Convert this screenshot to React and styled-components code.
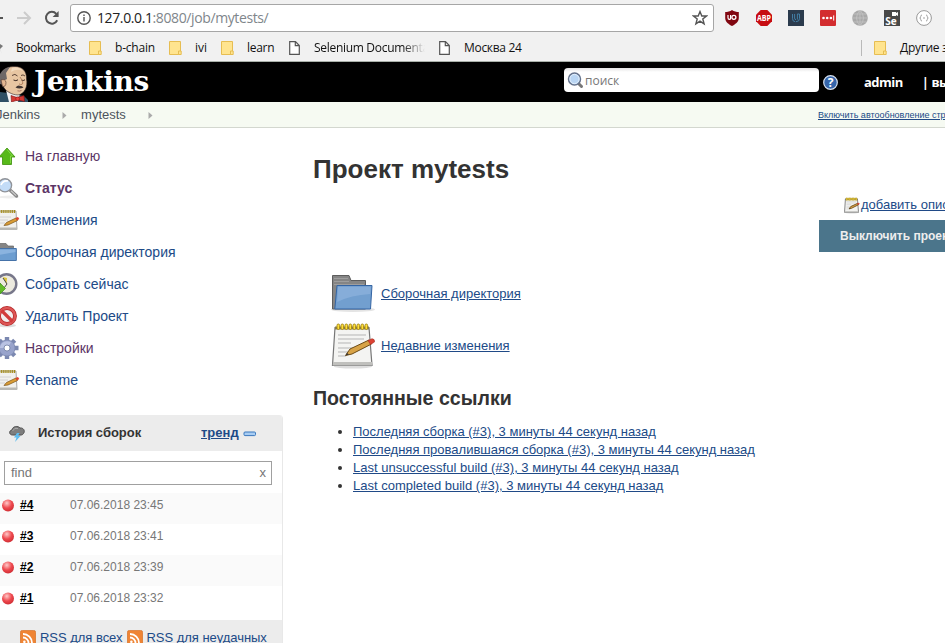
import React from "react";
import styled, { createGlobalStyle } from "styled-components";

const Global = createGlobalStyle`
  * { box-sizing: border-box; }
  body { margin: 0; background: #fff; overflow: hidden; font-family: "Liberation Sans", Arial, sans-serif; }
  svg { display: block; flex: none; }
`;

const Page = styled.div`
  width: 945px;
  height: 643px;
  overflow: hidden;
  background: #fff;
  color: #333;
  font-size: 13px;
  white-space: nowrap;
`;

/* ---------- browser frame ---------- */
const Browser = styled.div`
  height: 62px;
  background: #f1f1f1;
  border-bottom: 1px solid #a9b0a9;
  font-family: "Open Sans", "Noto Sans", sans-serif;
`;
const Toolbar = styled.div`
  height: 36px;
  display: flex;
  align-items: center;
`;
const NavButtons = styled.div`
  width: 70px;
  display: flex;
  align-items: center;
`;
const NavGroup = styled.div`
  display: flex;
  gap: 12px;
`;
const UrlBox = styled.div`
  width: 644px;
  height: 28px;
  border: 1px solid #a6a6a6;
  border-radius: 3px;
  background: #fff;
  display: flex;
  align-items: center;
  padding: 0 5px 0 6px;
`;
const Url = styled.span`
  flex: 1;
  margin-left: 6px;
  padding-bottom: 1px;
  font-size: 14px;
  letter-spacing: -0.39px;
  color: #80868b;
  b { font-weight: 400; color: #222; }
`;
const Extensions = styled.div`
  display: flex;
  gap: 16px;
  margin-left: 10px;
`;
const Bookmarks = styled.div`
  height: 23px;
  display: flex;
  align-items: center;
  font-size: 12px;
  color: #111;
`;
const Bookmark = styled.span`
  width: ${(p) => p.$w}px;
  flex: none;
  display: flex;
  align-items: center;
  overflow: hidden;
  letter-spacing: ${(p) => p.$ls || 0}px;
`;
const BookmarkLabel = styled.span`
  margin-left: ${(p) => p.$gap}px;
  ${(p) => p.$fade && `
    width: 111px;
    overflow: hidden;
    mask-image: linear-gradient(90deg, #000 80%, transparent);
  `}
`;
const Separator = styled.span`
  width: 1px;
  height: 16px;
  margin-left: auto;
  margin-right: 12px;
  background: #b9b9b9;
`;

/* ---------- Jenkins header ---------- */
const Header = styled.header`
  height: 40px;
  background: #000;
  display: flex;
  align-items: flex-start;
  overflow: hidden;
  color: #fff;
`;
const Brand = styled.div`
  width: 564px;
  height: 40px;
  flex: none;
  display: flex;
  align-items: flex-start;
`;
const BrandName = styled.span`
  margin: 3px 0 0 6px;
  font: bold 28px/34px "DejaVu Serif", serif;
  letter-spacing: -0.4px;
`;
const Search = styled.div`
  width: 255px;
  height: 24px;
  flex: none;
  margin-top: 6px;
  padding-left: 3px;
  border-radius: 4px;
  background: linear-gradient(#e4e4e4, #fff 4px);
  display: flex;
  align-items: center;
  color: #777;
  font: 12px "Open Sans", sans-serif;
  svg { margin-right: 1px; }
`;
const Help = styled.div`
  flex: none;
  margin: 13px 0 0 4px;
`;
const HeaderLink = styled.span`
  flex: none;
  margin: 10px 0 0 ${(p) => p.$gap}px;
  font: bold 13px/20px "Open Sans", sans-serif;
  letter-spacing: -0.5px;
`;

const Crumbs = styled.nav`
  height: 26px;
  background: #f6faf2;
  border-bottom: 1px solid #d3d7cf;
  display: flex;
  align-items: center;
  color: #4d545d;
`;
const Crumb = styled.span`
  margin-left: ${(p) => p.$gap}px;
  margin-right: ${(p) => p.$after}px;
`;
const RefreshLink = styled.a`
  width: 127px;
  margin-left: auto;
  overflow: hidden;
  font-size: 9px;
  text-decoration: underline;
  color: #204a87;
`;

/* ---------- body ---------- */
const Body = styled.div`
  display: flex;
`;
const Side = styled.aside`
  width: 283px;
  padding-top: 12px;
`;
const Task = styled.div`
  height: 32px;
  display: flex;
  align-items: center;
  font-size: 14px;
  font-weight: ${(p) => (p.$active ? 700 : 400)};
  color: ${(p) => (p.$visited ? "#5c3566" : "#204a87")};
  span { margin-left: 5px; color: inherit; }
  svg { width: 20px; height: 24px; }
`;

const History = styled.section`
  margin-top: 19px;
  border-right: 1px solid #e8e8e8;
  border-radius: 0 4px 0 0;
  overflow: hidden;
`;
const HistoryHead = styled.div`
  height: 36px;
  padding: 0 0 1px 8px;
  background: #ececec;
  display: flex;
  align-items: center;
  font-weight: 700;
`;
const HistoryTitle = styled.span`
  width: 163px;
  margin-left: 12px;
`;
const Trend = styled.a`
  margin-right: 4px;
  text-decoration: underline;
  color: #204a87;
`;
const TrendToggle = styled.span`
  margin-top: 3px;
`;
const Filter = styled.div`
  width: 268px;
  height: 24px;
  margin: 10px 0 8px 4px;
  padding: 0 5px 2px 6px;
  border: 1px solid #a0a0a0;
  display: flex;
  justify-content: space-between;
  align-items: center;
  color: #757575;
`;
const Build = styled.div`
  height: 31px;
  padding: 0 0 7px 2px;
  display: flex;
  align-items: center;
  background: ${(p) => (p.$odd ? "#fafafa" : "#fff")};
`;
const BuildNo = styled.a`
  width: 50px;
  margin-left: 6px;
  font-size: 12px;
  font-weight: 700;
  text-decoration: underline;
  color: #000;
`;
const BuildTime = styled.span`
  font-size: 12px;
  color: #777;
`;
const Feeds = styled.div`
  height: 30px;
  margin-top: 3px;
  padding: 9px 0 0 20px;
  background: #ececec;
  display: flex;
  gap: 4px;
  color: #204a87;
  line-height: 18px;
  letter-spacing: -0.03px;
  svg { margin-top: 1px; }
`;

const Main = styled.main`
  flex: 1;
  min-width: 0;
  padding: 24px 0 0 30px;
`;
const Title = styled.h1`
  height: 34px;
  margin: 0;
  font-size: 26px;
  line-height: 34px;
  color: #333;
`;
const Aside = styled.div`
  width: 126px;
  margin: 6px 0 0 auto;
  overflow: hidden;
`;
const AddDescription = styled.div`
  height: 28px;
  padding: 0 0 4px 25px;
  display: flex;
  align-items: center;
  svg { margin-top: 2px; }
`;
const DisableButton = styled.button`
  width: 150px;
  height: 32px;
  padding: 0 0 0 21px;
  border: 0;
  background: #4b758b;
  color: #eee;
  font: bold 12px "Liberation Sans", sans-serif;
  text-align: left;
  display: block;
`;
const Link = styled.a`
  color: #204a87;
  text-decoration: underline;
`;
const Summary = styled.div`
  padding: 16px 0 0 18px;
`;
const SummaryRow = styled.div`
  height: 52px;
  display: flex;
  align-items: center;
  svg { margin-right: 2px; }
  a { margin-bottom: 2px; }
`;
const Subtitle = styled.h2`
  height: 26px;
  margin: 13px 0 12px;
  font-size: 19.6px;
  line-height: 26px;
`;
const Permalinks = styled.ul`
  margin: 0;
  padding-left: 40px;
  line-height: 18px;
`;

/* ---------- icons ---------- */
const Arrow = ({ back }) => (
  <svg width={back ? 4 : 16} height="16" viewBox={back ? "12 0 4 16" : "0 0 16 16"} fill="none" stroke={back ? "#555" : "#ccc"} strokeWidth="2">
    <path d={back ? "M2 8H15" : "M1 8H14M8 2L14 8L8 14"} />
  </svg>
);
const Reload = () => (
  <svg width="16" height="16" viewBox="0 0 16 16">
    <path d="M13.2 10.3A5.9 5.9 0 1 1 12.3 3.8" fill="none" stroke="#555" strokeWidth="2" />
    <path d="M14.6 1V7H8.6Z" fill="#555" />
  </svg>
);
const Info = () => (
  <svg width="14" height="14" viewBox="0 0 14 14" fill="none" stroke="#555" strokeWidth="1.4">
    <circle cx="7" cy="7" r="6.2" />
    <path d="M7 6V10.5M7 3.4V5" />
  </svg>
);
const Star = () => (
  <svg width="16" height="16" viewBox="0 0 16 16" fill="none" stroke="#555" strokeWidth="1.4">
    <path d="M8 1.6L9.8 6H14.5L10.8 9L12.1 13.8L8 11.1L3.9 13.8L5.2 9L1.5 6H6.2Z" />
  </svg>
);
const FolderMark = () => (
  <svg width="13" height="14" viewBox="0 0 13 14">
    <path d="M.5.5H11.5V13.5H.5Z" fill="#ffe48f" stroke="#e6bd52" />
    <path d="M9.5 13.5V10H12.2V13.5Z" fill="#ffe48f" stroke="#e6bd52" />
  </svg>
);
const PageMark = () => (
  <svg width="11" height="14" viewBox="0 0 11 14" fill="#fff" stroke="#555" strokeWidth="1.2">
    <path d="M.7.7H6.5L10.3 4.5V13.3H.7ZM6.3.7V4.7H10.3" />
  </svg>
);
const label = { fontFamily: "Open Sans, sans-serif", fontWeight: 700, textAnchor: "middle", fill: "#fff" };

const ExtensionIcons = () => (
  <Extensions>
    <svg width="16" height="16" viewBox="0 0 16 16">
      <path d="M8 0C10 1.5 12.5 2 14.8 2V8C14.8 12 11 14.5 8 16C5 14.5 1.2 12 1.2 8V2C3.5 2 6 1.5 8 0Z" fill="#800610" />
      <path d="M4 5V7.8Q4 9.4 5.3 9.4T6.6 7.8V5" fill="none" stroke="#fff" strokeWidth="1.2" />
      <circle cx="9.9" cy="7.3" r="2" fill="none" stroke="#fff" strokeWidth="1.3" />
    </svg>
    <svg width="16" height="16" viewBox="0 0 16 16">
      <path d="M4.7 0H11.3L16 4.7V11.3L11.3 16H4.7L0 11.3V4.7Z" fill="#c70d12" />
      <text x="8" y="11" fontSize="8" textLength="14" lengthAdjust="spacingAndGlyphs" {...label}>ABP</text>
    </svg>
    <svg width="16" height="16" viewBox="0 0 16 16">
      <path d="M0 0H16V16H0Z" fill="#2b3b4d" />
      <path d="M4.5 4V8.5Q4.5 11.7 7.2 11.7M6.6 4V8Q6.6 9.7 8 9.7M9.4 9.5V4H11.5V8.5Q11.5 11.7 8 11.7" fill="none" stroke="#4584ad" strokeWidth=".9" />
    </svg>
    <svg width="16" height="16" viewBox="0 0 16 16">
      <rect width="16" height="16" rx="1" fill="#d32d2f" />
      <circle cx="3.5" cy="8" r="1.3" fill="#fff" /><circle cx="7.2" cy="8" r="1.3" fill="#fff" /><circle cx="10.9" cy="8" r="1.3" fill="#fff" />
      <path d="M13.7 5.4V10.6" stroke="#fff" />
    </svg>
    <svg width="16" height="16" viewBox="0 0 16 16">
      <circle cx="8" cy="8" r="7.8" fill="#a9a9a9" />
      <path d="M8 0V16M0 8H16M1.5 4H14.5M1.5 12H14.5M8 0Q1 8 8 16M8 0Q15 8 8 16" fill="none" stroke="#c4c4c4" strokeWidth=".8" />
    </svg>
    <svg width="16" height="16" viewBox="0 0 16 16">
      <path d="M0 0H16V16H0Z" fill="#484848" />
      <path d="M8 2H12V3L14 2V6L12 5V6H8Z" fill="#fff" />
      <text x="7" y="14.5" fontSize="10" {...label}>Se</text>
    </svg>
    <svg width="16" height="16" viewBox="0 0 16 16" fill="none" stroke="#999">
      <circle cx="8" cy="8" r="7.4" fill="#fff" />
      <path d="M6 5Q4.7 5 4.7 6.5T3.7 8Q4.7 8 4.7 9.5T6 11M10 5Q11.3 5 11.3 6.5T12.3 8Q11.3 8 11.3 9.5T10 11M7 8H9" strokeWidth=".9" />
    </svg>
  </Extensions>
);

const Butler = () => (
  <svg width="28" height="40" viewBox="0 0 28 40">
    <path d="M0 30L8 31L24 34L28 38V40H0Z" fill="#2f5064" />
    <path d="M6 28L20 31L18 40H9Z" fill="#f4f4f4" />
    <path d="M2 11C4 6 9 4.5 15 4.5C22 4.5 27 9 26.5 17C28 24 25 32 18 33C12 33 5 29 3 24Z" fill="#e8c6a2" stroke="#2a2020" strokeWidth=".6" />
    <path d="M12 6Q19 4 23 9Q17 6 11 10Z" fill="#f3dcc0" />
    <path d="M0 12Q3 6 10 5L6 11L7 17L5 18L3 23L0 22Z" fill="#6e6867" />
    <path d="M1 18Q5.5 16.500 6 20.500Q6 25 2.500 24.500Z" fill="#e2b690" stroke="#4b332a" strokeWidth=".6" />
    <path d="M12 13.500Q15 11 17.500 14M21 13.500Q23 12 25 14" fill="none" stroke="#4c342a" strokeWidth=".9" />
    <path d="M13.500 18Q16 19.500 18 17.800M21.500 18Q23 19.200 25 17.800" fill="none" stroke="#3a2923" strokeWidth="1" />
    <path d="M20 15Q23.500 20 22.500 22Q20.500 23.500 19 21.800" fill="none" stroke="#a4714f" strokeWidth=".8" />
    <path d="M15.500 25.500Q18 22.500 20.500 24Q22 23.500 23.500 25.500Q19.500 27.500 15.500 25.500" fill="#413532" />
    <path d="M17.500 28.800Q19.500 29.500 21.500 28.500" fill="none" stroke="#9b5b4d" strokeWidth=".8" />
    <path d="M11 33.500L17 35.500L24 33.500L24.500 39.500L18 38L11.500 40Z" fill="#d33833" stroke="#711" strokeWidth=".6" />
    <circle cx="17.600" cy="36.800" r="1.900" fill="#ef3d3a" stroke="#711" strokeWidth=".5" />
  </svg>
);
const SearchIcon = () => (
  <svg width="17" height="17" viewBox="0 0 17 17">
    <path d="M12 12L14.5 14.500" stroke="#777" strokeWidth="3" strokeLinecap="round" />
    <circle cx="7.500" cy="7" r="6" fill="#b9d5f3" stroke="#66738c" strokeWidth="1.500" />
    <circle cx="7.500" cy="7" r="4.600" fill="none" stroke="#e3effb" />
  </svg>
);
const HelpIcon = () => (
  <svg width="15" height="15" viewBox="0 0 15 15">
    <circle cx="7.500" cy="7.500" r="6.800" fill="#3565aa" stroke="#d9e3f2" strokeWidth="1.200" />
    <text x="7.500" y="11.800" fontSize="12" {...label}>?</text>
  </svg>
);
const Caret = () => (
  <svg width="5" height="8" viewBox="0 0 5 8"><path d="M.5 1L4.500 4.500L.5 8Z" fill="#aaa" /></svg>
);

const UpIcon = () => (
  <svg viewBox="4 0 20 24">
    <path d="M11 4L19 13H15.500V20.500H6.500V13H3Z" fill="#57b91a" stroke="#3c8f0a" strokeWidth=".8" />
    <path d="M11 5.500L16.500 12H14.500V19" fill="none" stroke="#8be04e" strokeWidth=".8" />
  </svg>
);
const LensIcon = () => (
  <svg viewBox="4 0 20 24">
    <ellipse cx="13" cy="21" rx="10" ry="1.500" fill="#eee" />
    <path d="M14.500 14.500L20.500 20" stroke="#888" strokeWidth="3.400" strokeLinecap="round" />
    <path d="M15 14.800L20.200 19.600" stroke="#ccc" strokeWidth="1.200" />
    <circle cx="9" cy="9.300" r="6.600" fill="#c3dcf7" stroke="#909399" strokeWidth="1.400" />
    <path d="M5 9Q7 4 12 5" fill="none" stroke="#fff" strokeWidth="1.600" />
  </svg>
);
const PadIcon = () => (
  <svg viewBox="4 0 20 24">
    <path d="M2 3H20L21 21.500H2Z" fill="#f1f1ee" stroke="#aaa" />
    <path d="M2 19.500H21V22H2Z" fill="#b9b9b5" />
    <path d="M3 3.500H20" stroke="#a28a18" strokeWidth="3" strokeDasharray="1.3 .8" />
    <path d="M4 9H15M4 12H12M4 15H9" stroke="#ccc" strokeWidth=".8" />
    <path d="M8 17.500L10.500 14.500L20 10L21.500 12.500L12 17Z" fill="#d99c35" stroke="#7a531a" strokeWidth=".7" />
    <path d="M19.500 10L22 9L23.300 11L21 12.500Z" fill="#df4030" />
  </svg>
);
const FolderIcon = () => (
  <svg viewBox="4 0 20 24">
    <path d="M2 3.500H10L12 6H17.500V12H2Z" fill="#858585" stroke="#666" strokeWidth=".7" />
    <path d="M2 8.500H20.300V20.500H2Z" fill="#6c9dd0" stroke="#4572a8" />
    <path d="M3 9.500H19.500V12L3 15Z" fill="#8ab3df" />
  </svg>
);
const ClockIcon = () => (
  <svg viewBox="4 0 20 24">
    <circle cx="10.500" cy="12" r="9.800" fill="#eceadf" stroke="#77778a" strokeWidth="2.400" />
    <path d="M7 5L11 6L10.500 12Z" fill="#ddc438" />
    <path d="M7 6L11 12L8 16" fill="none" stroke="#444" />
    <path d="M2 13H4V11L9.500 16.500L4 22V19H2Z" fill="#62bc29" stroke="#43921a" strokeWidth=".7" />
  </svg>
);
const StopIcon = () => (
  <svg viewBox="4 0 20 24">
    <ellipse cx="11" cy="21.500" rx="9" ry="1.800" fill="#ddd" />
    <circle cx="11" cy="12" r="8" fill="#f2efef" stroke="#b32626" strokeWidth="3.800" />
    <circle cx="11" cy="12" r="8" fill="none" stroke="#dd5656" strokeWidth="2.400" />
    <path d="M5.500 6.500L16.500 17.500" stroke="#d23c3c" strokeWidth="3.200" />
  </svg>
);
const GearIcon = () => (
  <svg viewBox="4 0 20 24">
    <g stroke="#7b88b0" strokeWidth="4.400">
      <path d="M11 1V23M0 12H22.500M3.300 4.300L18.700 19.700M18.700 4.300L3.300 19.700" />
    </g>
    <circle cx="11" cy="12" r="8" fill="#98a3cb" stroke="#7f8cb4" strokeWidth=".8" />
    <path d="M4 12A7 7 0 0 1 15 6.500L11 12Z" fill="#b9c2e2" />
    <circle cx="11" cy="12" r="3" fill="#fff" stroke="#6d7b9f" strokeWidth=".8" />
  </svg>
);
const StormIcon = () => (
  <svg width="18" height="18" viewBox="0 0 18 18">
    <path d="M4.500 11C1 11 .6 6.500 4 6C4.500 2 10 1.500 12 4C15.500 3.500 17.500 7 15.500 9.500C14.500 11.500 12 11 11 11Z" fill="#7d7d7d" stroke="#505050" />
    <path d="M4.500 7Q6.500 3 10 4.500" fill="none" stroke="#aaa" />
    <path d="M9 9L6 13.500H8.500L7 18L12.500 12H10L11.500 9Z" fill="#5ebdf0" />
  </svg>
);
const RedBall = () => (
  <svg width="12" height="14" viewBox="0 0 12 14">
    <defs><radialGradient id="ball" cx=".4" cy=".3" r=".75"><stop stopColor="#ffc9c9" /><stop offset=".55" stopColor="#ee484e" /><stop offset="1" stopColor="#cc2b31" /></radialGradient></defs>
    <circle cx="6" cy="7.500" r="6" fill="url(#ball)" />
  </svg>
);
const FeedIcon = () => (
  <svg width="16" height="16" viewBox="0 0 16 16" fill="none" stroke="#fff" strokeWidth="1.800">
    <rect x=".4" y=".4" width="15.200" height="15.200" rx="2" fill="#ef8434" stroke="#d6752d" strokeWidth=".8" />
    <path d="M3 7.500A5.600 5.600 0 0 1 8.500 13M3 4A9 9 0 0 1 12 13" />
    <circle cx="4.400" cy="11.800" r="1.300" fill="#fff" stroke="none" />
  </svg>
);
const BigFolder = () => (
  <svg width="48" height="48" viewBox="0 0 48 48">
    <ellipse cx="22" cy="39.500" rx="22" ry="2.500" fill="#e4e4e4" />
    <path d="M1.500 39V5.500H18L20 10.500H34.500V39Z" fill="#858585" stroke="#5d5d5d" />
    <path d="M3 8.500H17M3 11.500H18M3 14.500H33" stroke="#a5a5a5" strokeWidth=".8" />
    <path d="M6 15.500H41L39.500 39H3.800Z" fill="#729fcf" stroke="#3465a4" />
    <path d="M7 16.700H39.700L39.200 24Q20 25 6.200 32Z" fill="#91b6df" opacity=".65" />
  </svg>
);
const BigPad = ({ size = 48 }) => (
  <svg width={size} height={size} viewBox="0 0 48 48">
    <ellipse cx="22" cy="44.500" rx="19" ry="2" fill="#ddd" />
    <path d="M4 5.500H38L41 43.500H1.500Z" fill="#f4f4f2" stroke="#777" strokeWidth={size < 20 ? 2.5 : 1.2} />
    <path d="M2 40H41V43.500H1.600Z" fill="#c0c0bd" />
    <path d="M4 6H38" stroke="#847b50" strokeWidth="3" />
    <path d="M7 13H35M7 17H33M7 21H20M7 26H31M7 30H22M7 34H15" stroke="#b5b5b5" />
    {[6, 10, 14, 18, 22, 26, 30, 34].map((x) => (
      <rect key={x} x={x} y="2" width="2.600" height={size < 20 ? 8 : 5.5} rx="1.300" fill="#ffdf38" stroke="#a08416" strokeWidth=".9" />
    ))}
    <path d="M14.500 33.500L19 27L38 18L40.500 22L21 32Z" fill="#d8a347" stroke="#6e4c16" strokeWidth={size < 20 ? 2.5 : 1} />
    <path d="M37 18.500L41 16.700Q44 17 43.500 20L39.500 22.500Z" fill="#dd4334" stroke="#a32b22" strokeWidth=".6" />
    <path d="M14.500 33.500L16 31L18 32.500Z" fill="#333" />
  </svg>
);

const tasks = [
  { icon: UpIcon, text: "На главную", visited: true },
  { icon: LensIcon, text: "Статус", visited: true, active: true },
  { icon: PadIcon, text: "Изменения" },
  { icon: FolderIcon, text: "Сборочная директория" },
  { icon: ClockIcon, text: "Собрать сейчас" },
  { icon: StopIcon, text: "Удалить Проект" },
  { icon: GearIcon, text: "Настройки", visited: true },
  { icon: PadIcon, text: "Rename" },
];
const builds = [
  ["#4", "07.06.2018 23:45"],
  ["#3", "07.06.2018 23:41"],
  ["#2", "07.06.2018 23:39"],
  ["#1", "07.06.2018 23:32"],
];
const permalinks = [
  "Последняя сборка (#3), 3 минуты 44 секунд назад",
  "Последняя провалившаяся сборка (#3), 3 минуты 44 секунд назад",
  "Last unsuccessful build (#3), 3 минуты 44 секунд назад",
  "Last completed build (#3), 3 минуты 44 секунд назад",
];

export default function App() {
  return (
    <Page>
      <Global />
      <Browser>
        <Toolbar>
          <NavButtons>
            <NavGroup><Arrow back /><Arrow /><Reload /></NavGroup>
          </NavButtons>
          <UrlBox>
            <Info />
            <Url><b>127.0.0.1</b>:8080/job/mytests/</Url>
            <Star />
          </UrlBox>
          <ExtensionIcons />
        </Toolbar>
        <Bookmarks>
          <Bookmark $w={89} $ls={-0.4}>
            <svg width="3" height="14" viewBox="11 0 3 14"><path d="M8 1L14 5L11 8L13 13Z" fill="#777" /></svg>
            <BookmarkLabel $gap={13}>Bookmarks</BookmarkLabel>
          </Bookmark>
          <Bookmark $w={80} $ls={-0.2}><FolderMark /><BookmarkLabel $gap={13}>b-chain</BookmarkLabel></Bookmark>
          <Bookmark $w={52}><FolderMark /><BookmarkLabel $gap={13}>ivi</BookmarkLabel></Bookmark>
          <Bookmark $w={68} $ls={-0.3}><FolderMark /><BookmarkLabel $gap={13}>learn</BookmarkLabel></Bookmark>
          <Bookmark $w={150} $ls={-0.3}><PageMark /><BookmarkLabel $gap={14} $fade>Selenium Documentation</BookmarkLabel></Bookmark>
          <Bookmark $w={100} $ls={-0.3}><PageMark /><BookmarkLabel $gap={14}>Москва 24</BookmarkLabel></Bookmark>
          <Separator />
          <Bookmark $w={71} $ls={-0.3}><FolderMark /><BookmarkLabel $gap={13}>Другие закладки</BookmarkLabel></Bookmark>
        </Bookmarks>
      </Browser>
      <Header>
        <Brand><Butler /><BrandName>Jenkins</BrandName></Brand>
        <Search><SearchIcon />поиск</Search>
        <Help><HelpIcon /></Help>
        <HeaderLink $gap={26}>admin</HeaderLink>
        <HeaderLink $gap={19}>| выход</HeaderLink>
      </Header>
      <Crumbs>
        <Crumb $gap={-4} $after={22}>Jenkins</Crumb><Caret />
        <Crumb $gap={14} $after={22}>mytests</Crumb><Caret />
        <RefreshLink>Включить автообновление страниц</RefreshLink>
      </Crumbs>
      <Body>
        <Side>
          {tasks.map(({ icon: Icon, text, visited, active }) => (
            <Task key={text} $visited={visited} $active={active}><Icon /><span>{text}</span></Task>
          ))}
          <History>
            <HistoryHead>
              <StormIcon />
              <HistoryTitle>История сборок</HistoryTitle>
              <Trend>тренд</Trend>
              <TrendToggle>
                <svg width="14" height="6" viewBox="0 0 14 6"><rect x="1" y="1" width="11.500" height="3.600" rx="1" fill="#a8cdf3" stroke="#3b78bd" /></svg>
              </TrendToggle>
            </HistoryHead>
            <Filter><span>find</span><span>x</span></Filter>
            {builds.map(([no, time], i) => (
              <Build key={no} $odd={i % 2 === 0}><RedBall /><BuildNo>{no}</BuildNo><BuildTime>{time}</BuildTime></Build>
            ))}
            <Feeds><FeedIcon /><span>RSS для всех</span><FeedIcon /><span>RSS для неудачных</span></Feeds>
          </History>
        </Side>
        <Main>
          <Title>Проект mytests</Title>
          <Aside>
            <AddDescription><BigPad size={17} /><Link>добавить описание</Link></AddDescription>
            <DisableButton>Выключить проект</DisableButton>
          </Aside>
          <Summary>
            <SummaryRow><BigFolder /><Link>Сборочная директория</Link></SummaryRow>
            <SummaryRow><BigPad /><Link>Недавние изменения</Link></SummaryRow>
          </Summary>
          <Subtitle>Постоянные ссылки</Subtitle>
          <Permalinks>
            {permalinks.map((text) => <li key={text}><Link>{text}</Link></li>)}
          </Permalinks>
        </Main>
      </Body>
    </Page>
  );
}
